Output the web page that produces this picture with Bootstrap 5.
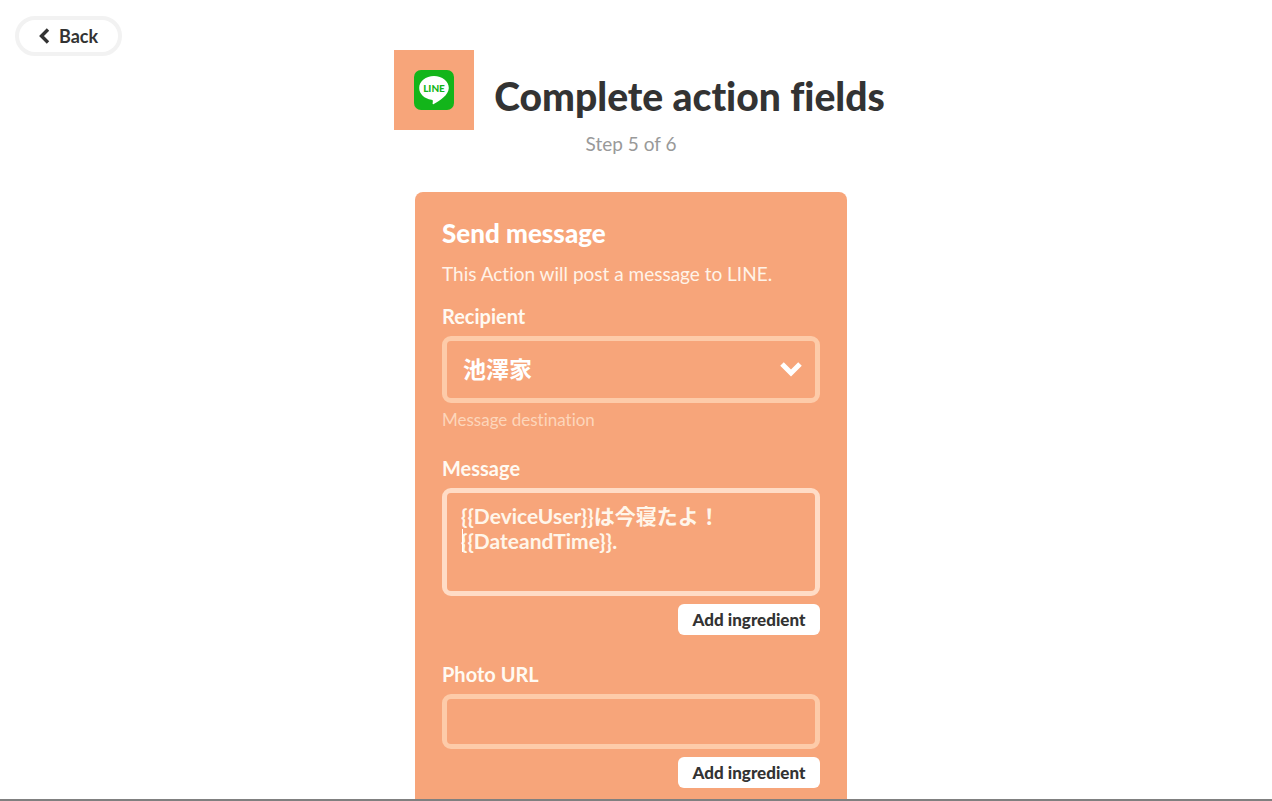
<!DOCTYPE html>
<html lang="en">
<head>
<meta charset="utf-8">
<meta name="viewport" content="width=device-width, initial-scale=1">
<title>Complete action fields</title>
<link href="https://cdn.jsdelivr.net/npm/bootstrap@5.3.0/dist/css/bootstrap.min.css" rel="stylesheet">
<style>
  :root { --peach: #f7a57a; --ink: #333; }
  body {
    font-family: Lato, "Noto Sans CJK JP", sans-serif;
    font-variant-ligatures: none;
    color: var(--ink);
    background: #fff;
    border-bottom: 2px solid #808080;
    padding-right: 10px;
  }
  .back-btn {
    border: 4px solid #f2f2f2;
    font-size: 18px;
    line-height: 24px;
    font-weight: 700;
    color: var(--ink);
    padding: 4px 20px;
    margin: 16px 0 0 15px;
  }
  .page-head { margin-top: -6px; }
  .title-row { gap: 20px; margin-left: 17px; }
  .service-tile { width: 80px; height: 80px; background: var(--peach); }
  .page-title { font-size: 39px; line-height: 48px; font-weight: 900; padding-top: 12px; }
  .step-note { font-size: 19px; line-height: 24px; color: #999; margin-top: 2px; }
  .logo-word { font: 900 10px Lato, sans-serif; }
  .action-card {
    width: 100%;
    max-width: 432px;
    margin-top: 36px;
    padding: 26px 27px 11px;
    border-radius: 8px 8px 0 0;
    background: var(--peach);
    color: #fff;
  }
  .action-title { font-size: 26px; line-height: 30px; font-weight: 900; margin-bottom: 14px; }
  .action-text { font-size: 19px; line-height: 24px; margin-bottom: 18px; color: #fff3e8; }
  .field-label { display: block; font-size: 20px; line-height: 24px; font-weight: 700; margin-bottom: 8px; color: #fffaf2; }
  .field-box, .field-box:focus {
    display: block;
    width: 100%;
    border: 5px solid #fdcba9;
    border-radius: 9px;
    background: transparent;
    color: #fff;
    font-weight: 700;
    outline: 0;
    box-shadow: none;
  }
  select.field-box { appearance: none; height: 67px; padding: 0 16px; font-size: 23px; }
  textarea.field-box { height: 108px; padding: 10px 14px; border-color: #ffdcc6; font-size: 21px; line-height: 25px; resize: none; overflow: hidden; color: #fff6ea; }
  input.field-box { height: 55px; padding: 0 14px; font-size: 21px; }
  .chevron { position: absolute; right: 18px; top: 25px; pointer-events: none; }
  .text-caret { position: absolute; left: 20px; top: 41px; width: 1px; height: 23px; background: #fff; }
  .field-hint { font-size: 17px; line-height: 20px; color: #fdd6bb; margin: 7px 0 26px; }
  .add-btn, .add-btn:hover {
    background: #fff;
    color: var(--ink);
    font-size: 17px;
    line-height: 21px;
    font-weight: 900;
    border: 0;
    border-radius: 6px;
    width: 142px;
    padding: 5px 0;
    margin-top: 8px;
  }
  .photo-field { margin-top: 27px; }
</style>
</head>
<body class="d-flex flex-column min-vh-100">
  <nav><button type="button" class="btn back-btn rounded-pill d-inline-flex align-items-center gap-2">
    <svg width="12" height="16" viewBox="0 0 12 16" fill="none" stroke="#333" stroke-width="3.4" aria-hidden="true"><path d="M9 1.500 2.500 8 9 14.500"/></svg>Back</button></nav>

  <header class="page-head text-center">
    <div class="title-row d-flex justify-content-center align-items-center">
      <div class="service-tile d-flex align-items-center justify-content-center flex-shrink-0">
        <svg width="40" height="40" viewBox="0 0 40 40" role="img" aria-label="LINE">
          <rect width="40" height="40" rx="7" fill="#13b51a"/>
          <path d="M20 6C11.800 6 5.200 11.400 5.200 18c0 5.900 5.200 10.800 12.300 11.800 1.700.4 1.500 1 1.100 3.700-.1.700.5 1 1.200.6 5.400-3.100 15-9 15-16.100C34.800 11.400 28.200 6 20 6Z" fill="#fff"/>
          <text class="logo-word" x="20" y="22" text-anchor="middle" fill="#13b51a">LINE</text>
        </svg>
      </div>
      <h1 class="page-title mb-0">Complete action fields</h1>
    </div>
    <p class="step-note mb-0">Step 5 of 6</p>
  </header>

  <main class="action-card mx-auto flex-grow-1">
    <h2 class="action-title">Send message</h2>
    <p class="action-text">This Action will post a message to LINE.</p>

    <label class="field-label" for="recipient">Recipient</label>
    <div class="position-relative">
      <select id="recipient" class="field-box"><option>池澤家</option></select>
      <svg class="chevron" width="22" height="17" viewBox="0 0 22 17" fill="none" stroke="#fff" stroke-width="5" aria-hidden="true"><path d="M2 3l9 9 9-9"/></svg>
    </div>
    <p class="field-hint">Message destination</p>

    <label class="field-label" for="message">Message</label>
    <div class="position-relative">
      <textarea id="message" class="field-box" spellcheck="false">{{DeviceUser}}は今寝たよ！
{{DateandTime}}.</textarea>
      <span class="text-caret"></span>
    </div>
    <div class="text-end"><button type="button" class="btn add-btn">Add ingredient</button></div>

    <div class="photo-field">
      <label class="field-label" for="photo">Photo URL</label>
      <input id="photo" type="text" class="field-box">
      <div class="text-end"><button type="button" class="btn add-btn">Add ingredient</button></div>
    </div>
  </main>
<script src="https://cdn.jsdelivr.net/npm/bootstrap@5.3.0/dist/js/bootstrap.bundle.min.js"></script>
</body>
</html>
